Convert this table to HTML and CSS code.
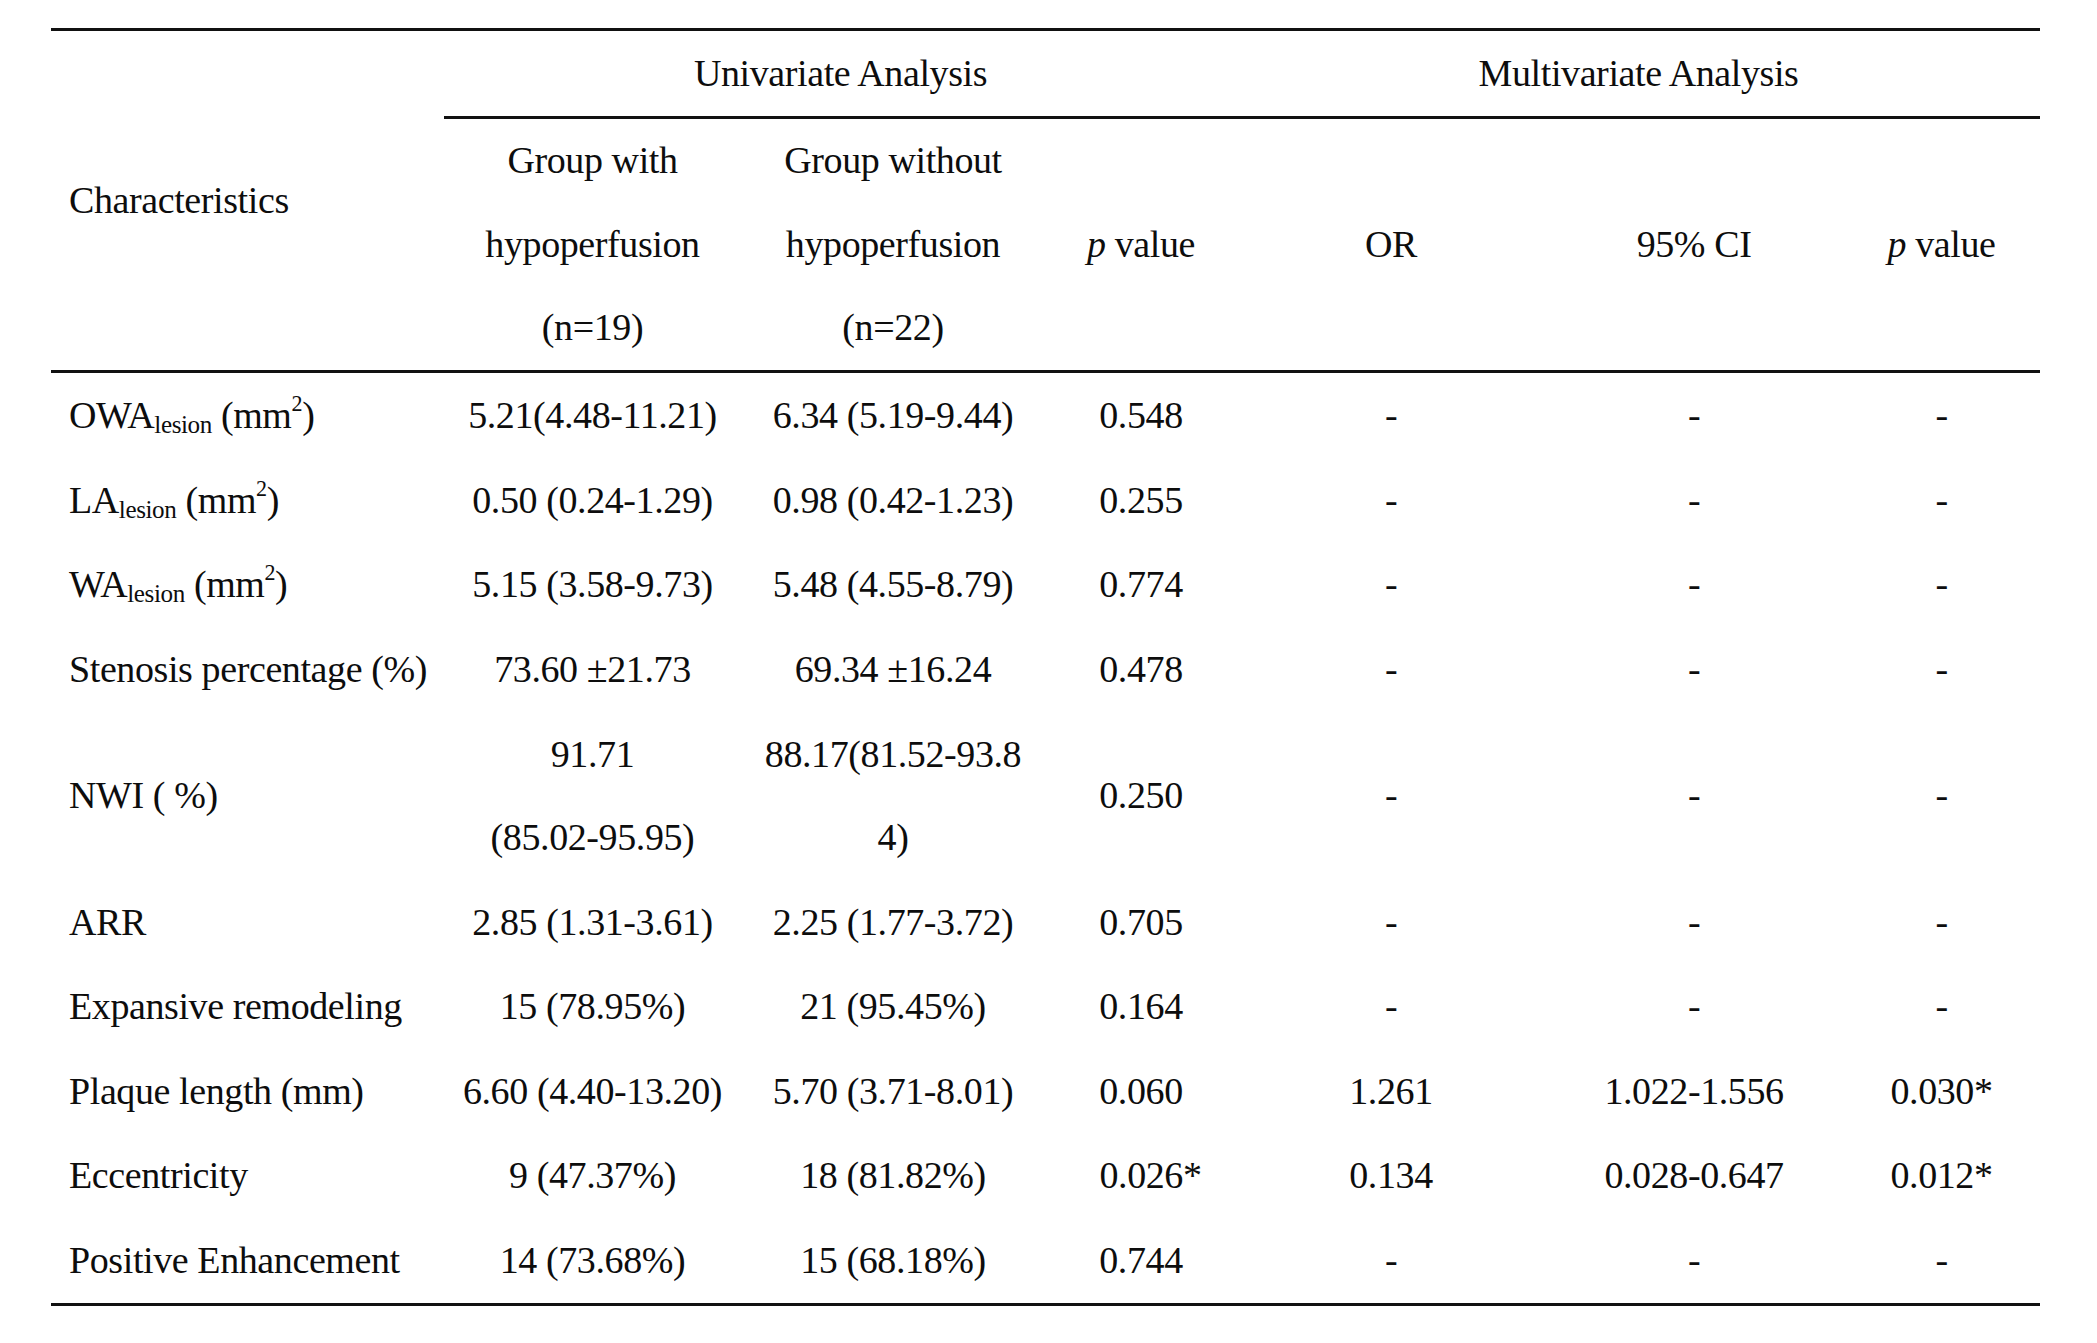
FILE: index.html
```html
<!DOCTYPE html>
<html lang="en">
<head>
<meta charset="utf-8">
<title>Univariate and multivariate analysis</title>
<link rel="stylesheet" href="styles.css">
</head>
<body>
<table class="stats">
  <colgroup>
    <col class="c-char">
    <col class="c-with">
    <col class="c-without">
    <col class="c-p">
    <col class="c-or">
    <col class="c-ci">
    <col class="c-p2">
  </colgroup>
  <thead>
    <tr class="head-top">
      <th class="char-head" rowspan="2">Characteristics</th>
      <th class="group-head" colspan="3">Univariate Analysis</th>
      <th class="group-head" colspan="3">Multivariate Analysis</th>
    </tr>
    <tr class="head-sub">
      <th>Group with<br>hypoperfusion<br>(n=19)</th>
      <th>Group without<br>hypoperfusion<br>(n=22)</th>
      <th><i>p</i> value</th>
      <th>OR</th>
      <th>95% CI</th>
      <th><i>p</i> value</th>
    </tr>
  </thead>
  <tbody>
    <tr class="first">
      <td class="label">OWA<span class="sub">lesion</span> (mm<span class="sup">2</span>)</td>
      <td>5.21(4.48-11.21)</td>
      <td>6.34 (5.19-9.44)</td>
      <td>0.548</td>
      <td>-</td>
      <td>-</td>
      <td>-</td>
    </tr>
    <tr>
      <td class="label">LA<span class="sub">lesion</span> (mm<span class="sup">2</span>)</td>
      <td>0.50 (0.24-1.29)</td>
      <td>0.98 (0.42-1.23)</td>
      <td>0.255</td>
      <td>-</td>
      <td>-</td>
      <td>-</td>
    </tr>
    <tr>
      <td class="label">WA<span class="sub">lesion</span> (mm<span class="sup">2</span>)</td>
      <td>5.15 (3.58-9.73)</td>
      <td>5.48 (4.55-8.79)</td>
      <td>0.774</td>
      <td>-</td>
      <td>-</td>
      <td>-</td>
    </tr>
    <tr>
      <td class="label">Stenosis percentage (%)</td>
      <td>73.60 ±21.73</td>
      <td>69.34 ±16.24</td>
      <td>0.478</td>
      <td>-</td>
      <td>-</td>
      <td>-</td>
    </tr>
    <tr>
      <td class="label">NWI ( %)</td>
      <td>91.71<br>(85.02-95.95)</td>
      <td>88.17(81.52-93.8<br>4)</td>
      <td>0.250</td>
      <td>-</td>
      <td>-</td>
      <td>-</td>
    </tr>
    <tr>
      <td class="label">ARR</td>
      <td>2.85 (1.31-3.61)</td>
      <td>2.25 (1.77-3.72)</td>
      <td>0.705</td>
      <td>-</td>
      <td>-</td>
      <td>-</td>
    </tr>
    <tr>
      <td class="label">Expansive remodeling</td>
      <td>15 (78.95%)</td>
      <td>21 (95.45%)</td>
      <td>0.164</td>
      <td>-</td>
      <td>-</td>
      <td>-</td>
    </tr>
    <tr>
      <td class="label">Plaque length (mm)</td>
      <td>6.60 (4.40-13.20)</td>
      <td>5.70 (3.71-8.01)</td>
      <td>0.060</td>
      <td>1.261</td>
      <td>1.022-1.556</td>
      <td>0.030*</td>
    </tr>
    <tr>
      <td class="label">Eccentricity</td>
      <td>9 (47.37%)</td>
      <td>18 (81.82%)</td>
      <td>0.026<span class="star">*</span></td>
      <td>0.134</td>
      <td>0.028-0.647</td>
      <td>0.012*</td>
    </tr>
    <tr class="last">
      <td class="label">Positive Enhancement</td>
      <td>14 (73.68%)</td>
      <td>15 (68.18%)</td>
      <td>0.744</td>
      <td>-</td>
      <td>-</td>
      <td>-</td>
    </tr>
  </tbody>
</table>
</body>
</html>
```

FILE: styles.css
```css
html, body {
  margin: 0;
  padding: 0;
  background: #ffffff;
}

body {
  font-family: "Liberation Serif", "Times New Roman", serif;
  font-size: 38px;
  letter-spacing: -0.4px;
  color: #0d0d0d;
}

.stats {
  margin: 28px 0 0 51px;
  width: 1989px;
  table-layout: fixed;
  border-collapse: separate;
  border-spacing: 0;
}

.c-char { width: 393px; }
.c-with { width: 297px; }
.c-without { width: 304px; }
.c-p { width: 192px; }
.c-or { width: 308px; }
.c-ci { width: 298px; }
.c-p2 { width: 197px; }

.stats th,
.stats td {
  font-weight: normal;
  text-align: center;
  vertical-align: middle;
  white-space: nowrap;
  padding: 0.65px 0;
  line-height: 83.35px;
}

.head-top th {
  border-top: 3px solid #111111;
  padding: 0.75px 0;
  line-height: 83.5px;
}

.group-head {
  border-bottom: 3px solid #111111;
}

.char-head {
  text-align: left !important;
  padding-left: 18px !important;
  border-bottom: 3px solid #111111;
}

.head-sub th {
  border-bottom: 3px solid #111111;
  padding: 0;
  line-height: 83.5px;
}

.first td {
  padding-top: 1.6px;
}

.stats td.label {
  text-align: left;
  padding-left: 18px;
}

.last td {
  border-bottom: 3px solid #111111;
}

.sub {
  font-size: 0.66em;
  line-height: 0;
  vertical-align: -5px;
}

.sup {
  font-size: 0.58em;
  line-height: 0;
  vertical-align: 17px;
}

.star {
  margin-right: -0.5em;
}
```
